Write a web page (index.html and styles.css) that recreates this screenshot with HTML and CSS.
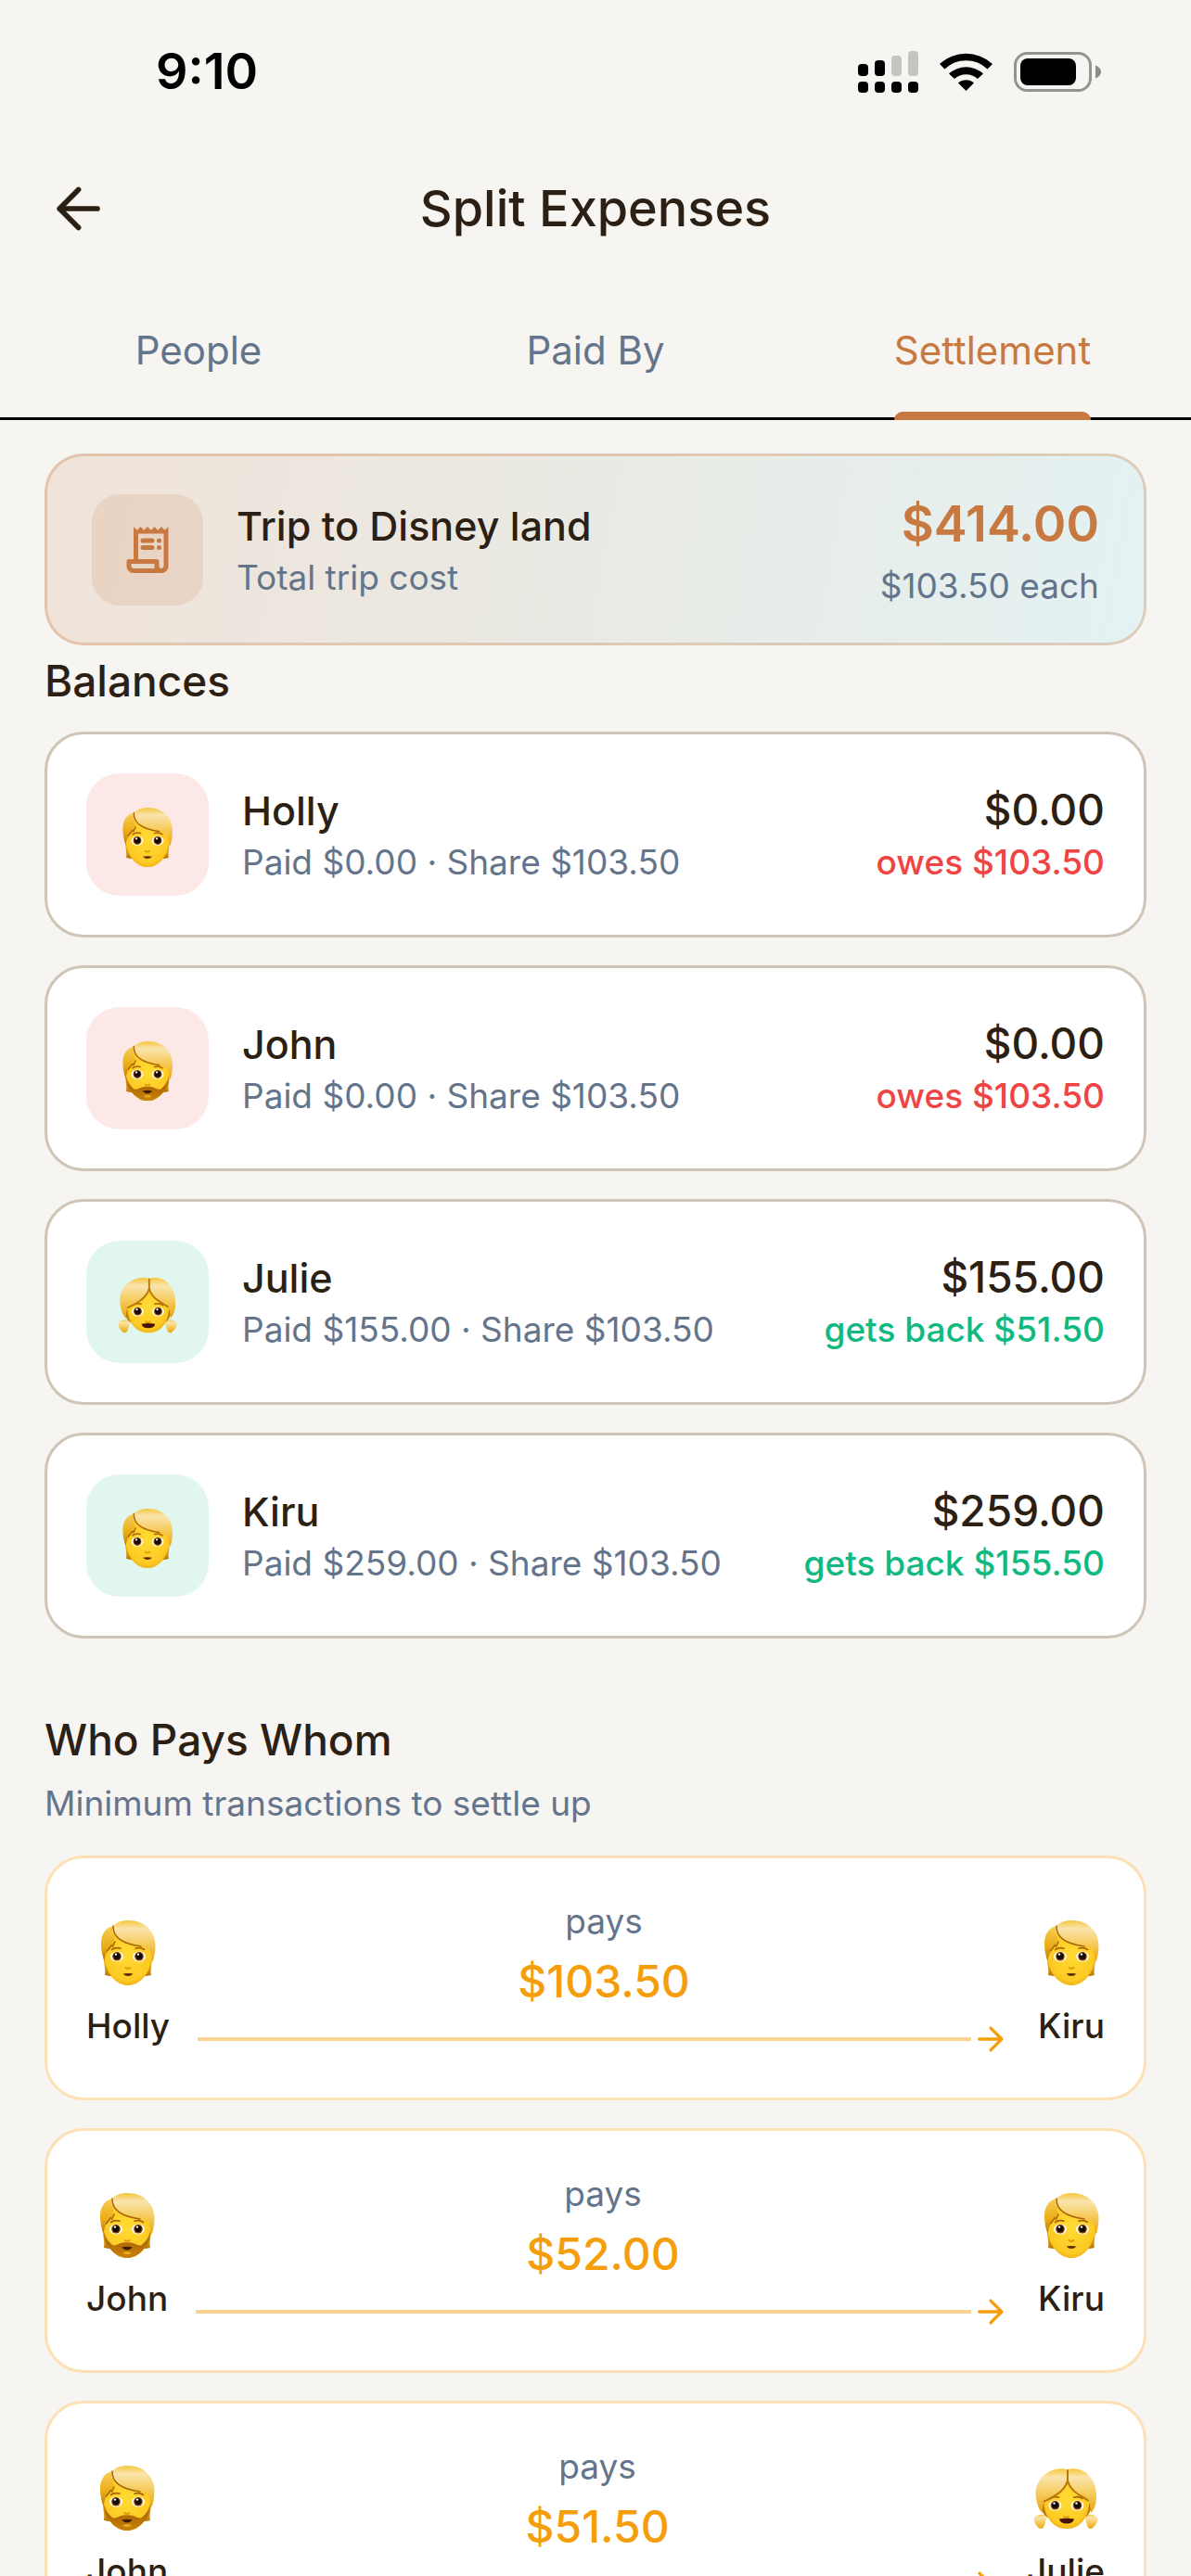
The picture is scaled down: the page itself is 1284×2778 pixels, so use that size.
FILE: index.html
```html
<!DOCTYPE html>
<html lang="en">
<head>
  <meta charset="UTF-8" />
  <meta name="viewport" content="width=device-width, initial-scale=1" />
  <title>Split Expenses</title>
  <link rel="stylesheet" href="styles.css">
</head>
<body>
  <!-- Shared faces and arrow -->
  <svg class="sprites" aria-hidden="true">
    <defs>
      <radialGradient id="skin" cx="50%" cy="45%" r="62%">
        <stop offset="0" stop-color="#ffdb33" />
        <stop offset="0.75" stop-color="#fdca24" />
        <stop offset="1" stop-color="#e8a30c" />
      </radialGradient>
      <linearGradient id="hair" x1="0" y1="0" x2="0" y2="1">
        <stop offset="0" stop-color="#f5c73c" />
        <stop offset="0.2" stop-color="#fae4ae" />
        <stop offset="0.5" stop-color="#f7d069" />
        <stop offset="1" stop-color="#e9a50c" />
      </linearGradient>
      <linearGradient id="side" x1="0" y1="0" x2="0" y2="1">
        <stop offset="0" stop-color="#f8cf55" />
        <stop offset="0.6" stop-color="#eaab14" />
        <stop offset="1" stop-color="#b8780a" />
      </linearGradient>
      <linearGradient id="beard" x1="0" y1="0" x2="0" y2="1">
        <stop offset="0" stop-color="#c98a10" />
        <stop offset="0.5" stop-color="#b06a06" />
        <stop offset="1" stop-color="#c98408" />
      </linearGradient>

      <g id="eyes">
        <ellipse cx="24" cy="40" rx="7" ry="5.600" fill="#fffaea" />
        <ellipse cx="48" cy="40" rx="7" ry="5.600" fill="#fffaea" />
        <circle cx="24" cy="39.800" r="4.800" fill="#7a3b0b" />
        <circle cx="48" cy="39.800" r="4.800" fill="#7a3b0b" />
        <circle cx="24" cy="39.600" r="3.500" fill="#120a04" />
        <circle cx="48" cy="39.600" r="3.500" fill="#120a04" />
        <circle cx="23" cy="37.600" r="1.200" fill="#fff" />
        <circle cx="47" cy="37.600" r="1.200" fill="#fff" />
        <path d="M18.500 32.500Q22.500 29.500 28 31.200M44 31.200Q49.500 29.500 53.500 32.500" fill="none" stroke="#a96404" stroke-width="1.600" stroke-linecap="round" />
        <path d="M33.500 52Q36 54 38.500 52" fill="none" stroke="#e09a0a" stroke-width="2" stroke-linecap="round" />
      </g>

      <g id="head">
        <path d="M12 26C6 38 13 52 11 60L16 61H56L61 60C59 52 66 38 60 26Z" fill="url(#side)" />
        <path d="M10 26C9 44 12 54 18 61.500C24 68.500 30 71 36 71C42 71 48 68.500 54 61.500C60 54 63 44 62 26Q52 10 36 10Q18 10 10 26Z" fill="url(#skin)" />
      </g>

      <g id="shorthair">
        <path d="M20 7C11 9 6.500 17 7 28C7.300 35 9 41 10.500 45C11 40 12.500 35 16 32L18.500 28L19.500 30L22 24C20 18 19 12 20 7Z" fill="url(#side)" />
        <path d="M20 7C24 2.500 30 1 37 1C54 1 65.500 13 65.500 28C65.500 36 64 42 62.500 46C61.500 39 60 34 57 28L57 34C55 31 53 29 51.500 26.500L52 30C42 28 28 26 23 18C20.500 14 19.500 11 20 7Z" fill="url(#hair)" />
        <path d="M20 7C19.500 18 28 26 50 29M22 24L19.500 29.500M18.500 27.500L13.500 34" fill="none" stroke="#a96506" stroke-width="1.500" stroke-linecap="round" />
      </g>
    </defs>

    <symbol id="face-person" viewBox="0 0 72 72">
      <use href="#head" />
      <use href="#eyes" />
      <path d="M30.500 58.500Q36 57.500 41.500 58.500Q39 61 36 61Q33 61 30.500 58.500Z" fill="#5b2a08" />
      <use href="#shorthair" />
    </symbol>

    <symbol id="face-beard" viewBox="0 0 72 72">
      <use href="#head" />
      <path d="M10.500 40C12 48 16 54 21 57.500C26 58 29 53.500 36 54.500C43 53.500 46 58 51 57.500C56 54 60 48 61.500 40C61.500 50 59 56 54 61.500C48 68.500 42 71 36 71C30 71 24 68.500 18 61.500C13 56 10.500 50 10.500 40Z" fill="url(#beard)" />
      <use href="#eyes" />
      <path d="M30 59.500Q36 58 42 59.500Q39 62.500 36 62.500Q33 62.500 30 59.500Z" fill="#3f1c05" />
      <path d="M31 65.500Q36 62.500 41 65.500L38.500 67H33.500Z" fill="#e8aa20" />
      <use href="#shorthair" />
    </symbol>

    <symbol id="face-girl" viewBox="0 0 72 72">
      <path d="M13 54C8 53 3 55 1.500 58C2 64 6 69 10 69C13 68 14 62 15 58Z" fill="url(#hair)" />
      <path d="M59 54C64 53 69 55 70.500 58C70 64 66 69 62 69C59 68 58 62 57 58Z" fill="url(#hair)" />
      <path d="M8 30C8 46 10 52 16 57H57C63 52 65 46 64 30Z" fill="#b8780a" />
      <path d="M12 36C12 50 16 58 22 63.500C27 68 32 69 37 69C42 69 47 68 52 63.500C58 58 61.500 50 61.500 36C56 20 46 12 37 12C26 12 16 20 12 36Z" fill="url(#skin)" />
      <g transform="translate(0.500 4)"><use href="#eyes" /></g>
      <path d="M29 58.500Q37 57 45 58.500Q44 63.500 37 63.500Q30 63.500 29 58.500Z" fill="#4a1305" />
      <path d="M38 5.500C32 3 24 4 17 8C7 14 2 24 4 36C5 43 7 49 11 52C11 46 11 42 13 39C22 35 35 29 38 17C41 29 52 33 60 38C62 42 63 46 63 52C67 48 69 42 69 34C69 23 65 14 57 8C51 4 43 3 38 5.500Z" fill="url(#hair)" />
      <path d="M38 6V17C35 29 22 35 13 39.500M38 17C41 29 52 33 60 38.500" fill="none" stroke="#b87508" stroke-width="2" stroke-linecap="round" />
    </symbol>

    <symbol id="arrow" viewBox="0 0 24 24">
      <path d="M5 12h13.800M12 5.200l6.800 6.800-6.800 6.800" fill="none" stroke="currentColor" stroke-width="1.900" stroke-linecap="round" stroke-linejoin="round" />
    </symbol>
  </svg>

  <div class="screen">
    <div class="status-bar">
      <span class="clock">9:10</span>
      <svg class="status-icons" viewBox="0 0 264 48" aria-hidden="true">
        <rect x="0" y="16" width="11" height="13" rx="4" />
        <rect x="18" y="12" width="11" height="17" rx="4" />
        <rect x="36" y="7" width="11" height="22" rx="4" fill="#c5c4c1" />
        <rect x="54" y="2" width="11" height="27" rx="4" fill="#c5c4c1" />
        <rect x="0" y="35" width="11" height="12" rx="4" />
        <rect x="18" y="35" width="11" height="12" rx="4" />
        <rect x="36" y="35" width="11" height="12" rx="4" />
        <rect x="54" y="35" width="11" height="12" rx="4" />
        <path d="M88 16a42 42 0 0 1 57 0l-5.500 5.500a33 33 0 0 0-46 0z" />
        <path d="M98 26.500a27.500 27.500 0 0 1 37 0l-6 5.500a18.500 18.500 0 0 0-25 0z" />
        <path d="M108 36.500a13 13 0 0 1 17 0l-8.500 8.500z" />
        <rect x="169.500" y="4.500" width="81" height="40" rx="13" fill="none" stroke="#93938f" stroke-width="3" />
        <rect x="175" y="10" width="60" height="29" rx="8" />
        <path d="M256 17.500c4 1.500 6 4 6 7s-2 5.500-6 7z" fill="#8b8b88" />
      </svg>
    </div>

    <header class="app-bar">
      <button class="back" type="button" aria-label="Back">
        <svg viewBox="0 0 24 24" aria-hidden="true"><path d="M19 12H5.400M12.200 5.200 5.400 12l6.800 6.800" fill="none" stroke="currentColor" stroke-width="1.900" stroke-linecap="round" stroke-linejoin="round" /></svg>
      </button>
      <h1>Split Expenses</h1>
    </header>

    <nav class="tabs">
      <button class="tab" type="button"><span>People</span></button>
      <button class="tab" type="button"><span>Paid By</span></button>
      <button class="tab active" type="button"><span>Settlement</span></button>
    </nav>

    <main>
      <section class="summary">
        <div class="summary-icon">
          <svg viewBox="0 0 24 24" fill="currentColor" aria-hidden="true">
            <path fill-rule="evenodd" d="M19.500 3.500 18 2l-1.500 1.500L15 2l-1.500 1.500L12 2l-1.500 1.500L9 2 7.500 3.500 6 2v14H4c-.55 0-1 .45-1 1v2c0 1.660 1.340 3 3 3h12c1.660 0 3-1.340 3-3V2zM15 20H6c-.55 0-1-.45-1-1v-1h10zm4-1c0 .55-.45 1-1 1s-1-.45-1-1v-2c0-.55-.45-1-1-1H8V5h11z" />
            <rect x="9" y="7" width="6" height="2" rx="1" />
            <rect x="16" y="7" width="2" height="2" rx="1" />
            <rect x="9" y="10" width="6" height="2" rx="1" />
            <rect x="16" y="10" width="2" height="2" rx="1" />
          </svg>
        </div>
        <div class="info">
          <div class="name">Trip to Disney land</div>
          <div class="sub">Total trip cost</div>
        </div>
        <div class="total">
          <div class="total-amount">$414.00</div>
          <div class="sub">$103.50 each</div>
        </div>
      </section>

      <h2 class="balances-title">Balances</h2>
      <div class="list">
        <div class="card balance">
          <div class="avatar owes"><svg><use href="#face-person" /></svg></div>
          <div class="info">
            <div class="name">Holly</div>
            <div class="sub">Paid $0.00 · Share $103.50</div>
          </div>
          <div class="result">
            <div class="amount">$0.00</div>
            <div class="status red">owes $103.50</div>
          </div>
        </div>
        <div class="card balance">
          <div class="avatar owes"><svg><use href="#face-beard" /></svg></div>
          <div class="info">
            <div class="name">John</div>
            <div class="sub">Paid $0.00 · Share $103.50</div>
          </div>
          <div class="result">
            <div class="amount">$0.00</div>
            <div class="status red">owes $103.50</div>
          </div>
        </div>
        <div class="card balance">
          <div class="avatar gets"><svg><use href="#face-girl" /></svg></div>
          <div class="info">
            <div class="name">Julie</div>
            <div class="sub">Paid $155.00 · Share $103.50</div>
          </div>
          <div class="result">
            <div class="amount">$155.00</div>
            <div class="status green">gets back $51.50</div>
          </div>
        </div>
        <div class="card balance">
          <div class="avatar gets"><svg><use href="#face-person" /></svg></div>
          <div class="info">
            <div class="name">Kiru</div>
            <div class="sub">Paid $259.00 · Share $103.50</div>
          </div>
          <div class="result">
            <div class="amount">$259.00</div>
            <div class="status green">gets back $155.50</div>
          </div>
        </div>
      </div>

      <h2 class="pays-title">Who Pays Whom</h2>
      <p class="sub pays-note">Minimum transactions to settle up</p>
      <div class="list">
        <div class="card payment">
          <div class="person"><svg><use href="#face-person" /></svg><span>Holly</span></div>
          <div class="flow">
            <div class="sub">pays</div>
            <div class="pay-amount">$103.50</div>
            <div class="line"><svg><use href="#arrow" /></svg></div>
          </div>
          <div class="person"><svg><use href="#face-person" /></svg><span>Kiru</span></div>
        </div>
        <div class="card payment">
          <div class="person"><svg><use href="#face-beard" /></svg><span>John</span></div>
          <div class="flow">
            <div class="sub">pays</div>
            <div class="pay-amount">$52.00</div>
            <div class="line"><svg><use href="#arrow" /></svg></div>
          </div>
          <div class="person"><svg><use href="#face-person" /></svg><span>Kiru</span></div>
        </div>
        <div class="card payment">
          <div class="person"><svg><use href="#face-beard" /></svg><span>John</span></div>
          <div class="flow">
            <div class="sub">pays</div>
            <div class="pay-amount">$51.50</div>
            <div class="line"><svg><use href="#arrow" /></svg></div>
          </div>
          <div class="person"><svg><use href="#face-girl" /></svg><span>Julie</span></div>
        </div>
      </div>
    </main>
  </div>
</body>
</html>
```

FILE: styles.css
```css
* {
  box-sizing: border-box;
}

body {
  margin: 0;
  font-family: Inter, "Liberation Sans", sans-serif;
  font-optical-sizing: none;
  background: #f6f5f1;
  color: #2c1f14;
}

h1, h2, p {
  margin: 0;
  font-weight: 500;
}

button {
  padding: 0;
  border: none;
  background: none;
  font: inherit;
  color: inherit;
  cursor: pointer;
}

.sprites {
  position: absolute;
  width: 0;
  height: 0;
}

.screen {
  display: flex;
  flex-direction: column;
  height: 100vh;
  overflow: hidden;
}

/* Status bar */
.status-bar {
  display: flex;
  justify-content: space-between;
  align-items: center;
  flex: none;
  height: 141px;
  padding: 12px 95px 0 168px;
  color: #000;
}

.clock {
  font-size: 54px;
  font-weight: 600;
  line-height: 60px;
}

.status-icons {
  width: 264px;
  height: 48px;
}

/* App bar */
.app-bar {
  display: grid;
  grid-template-columns: 72px 1fr 72px;
  align-items: center;
  flex: none;
  height: 168px;
  padding: 0 48px;
}

.back,
.back svg {
  display: block;
  width: 72px;
  height: 72px;
}

.app-bar h1 {
  font-size: 54px;
  line-height: 72px;
  text-align: center;
}

/* Tabs */
.tabs {
  display: flex;
  flex: none;
  height: 144px;
  border-bottom: 3px solid #000;
}

.tab {
  display: flex;
  flex: 1;
  justify-content: center;
  font-size: 42px;
  line-height: 60px;
  color: #64748b;
}

.tab span {
  position: relative;
  height: 144px;
  padding-top: 39px;
}

.tab.active {
  color: #c87941;
}

.tab.active span::after {
  content: "";
  position: absolute;
  left: 0;
  right: 0;
  bottom: 0;
  height: 9px;
  border-radius: 9px 9px 0 0;
  background: #c87941;
}

main {
  flex: 1;
  min-height: 0;
  padding: 36px 48px 48px;
  overflow-y: auto;
  scrollbar-width: none;
}

h2 {
  font-size: 46px;
  line-height: 60px;
}

.balances-title {
  margin: 8px 0 25px;
}

.pays-title {
  margin: 79px 0 13px;
}

.pays-note {
  margin-bottom: 30px;
}

.info {
  flex: 1;
}

.name {
  font-size: 43px;
  font-weight: 500;
  line-height: 60px;
}

.sub {
  font-size: 37px;
  font-weight: 400;
  line-height: 52px;
  color: #64748b;
}

/* Trip total */
.summary {
  display: flex;
  align-items: center;
  gap: 36px;
  padding: 35px 48px;
  border: 3px solid rgba(200, 121, 65, 0.3);
  border-radius: 42px;
  background: linear-gradient(100deg, #f0e3d9, #e9eae4 50%, #e4f2f3) border-box;
}

.summary-icon {
  display: flex;
  align-items: center;
  justify-content: center;
  width: 120px;
  height: 120px;
  border-radius: 30px;
  background: rgba(200, 121, 65, 0.15);
  color: #c87941;
}

.summary-icon svg {
  width: 60px;
  height: 60px;
}

.total {
  text-align: right;
}

.total-amount {
  margin-bottom: 3px;
  font-size: 54px;
  font-weight: 600;
  line-height: 76px;
  color: #c87941;
}

/* Cards */
.list {
  display: flex;
  flex-direction: column;
  gap: 30px;
}

.card {
  display: flex;
  align-items: center;
  padding: 42px;
  border: 3px solid #cfc5b6;
  border-radius: 42px;
  background: #fff;
}

.balance {
  gap: 36px;
}

.avatar {
  display: flex;
  align-items: center;
  justify-content: center;
  width: 132px;
  height: 132px;
  padding-top: 6px;
  border-radius: 36px;
}

.avatar svg {
  width: 66px;
  height: 66px;
}

.owes {
  background: #fde8e8;
}

.gets {
  background: #e1f6ee;
}

.result {
  text-align: right;
}

.amount {
  font-size: 46px;
  font-weight: 500;
  line-height: 60px;
}

.status {
  font-size: 37px;
  font-weight: 500;
  line-height: 54px;
}

.red {
  color: #ef4444;
}

.green {
  color: #10b981;
}

/* Who pays whom */
.payment {
  gap: 30px;
  border-color: #fde0b5;
}

.person {
  display: flex;
  flex-direction: column;
  align-items: center;
  gap: 16px;
  padding-top: 16px;
}

.person svg {
  width: 72px;
  height: 72px;
}

.person span {
  font-size: 37px;
  font-weight: 500;
  line-height: 54px;
}

.flow {
  flex: 1;
  text-align: center;
}

.pay-amount {
  margin-bottom: 2px;
  font-size: 48px;
  font-weight: 500;
  line-height: 78px;
  color: #f59e0b;
}

.line {
  display: flex;
  align-items: center;
  color: #f59e0b;
}

.line::before {
  content: "";
  flex: 1;
  height: 4px;
  background: #fad392;
}

.line svg {
  width: 42px;
  height: 42px;
}
```
